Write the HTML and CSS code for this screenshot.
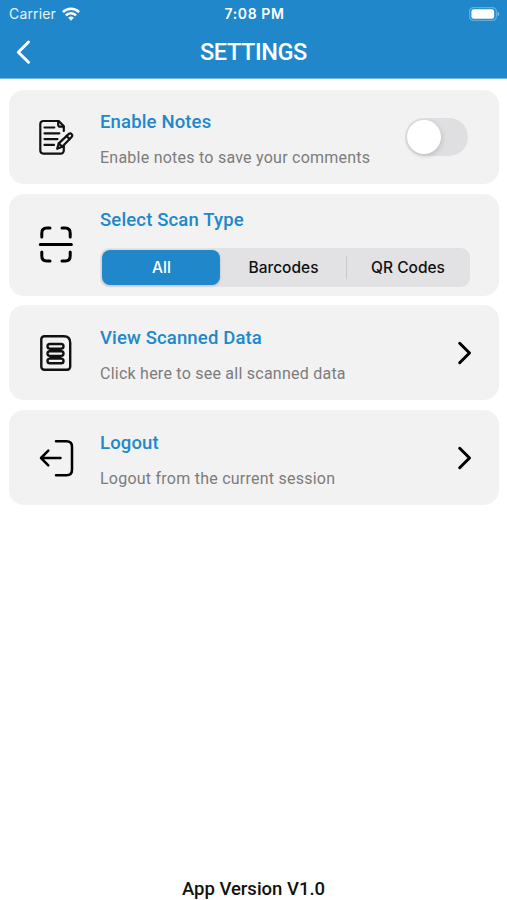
FILE: index.html
```html
<!DOCTYPE html>
<html lang="en">
<head>
<meta charset="utf-8">
<title>Settings</title>
<link rel="stylesheet" href="styles.css">
</head>
<body>
<div class="app">
  <header class="header">
    <div class="status">
      <div class="carrier"><span class="carrier-name">Carrier</span>
        <svg class="wifi" width="18" height="14" viewBox="0 0 18 14" fill="none" stroke="#fff" stroke-width="2.6"><path d="M.9 5.200a11.400 11.400 0 0 1 16.200 0"/><path d="M3.900 8.400a7.200 7.200 0 0 1 10.200 0"/><path d="M9 13.700 6.200 10.800a4 4 0 0 1 5.600 0z" fill="#fff" stroke="none"/></svg>
      </div>
      <span class="clock">7:08 PM</span>
      <svg class="battery" width="31" height="14" viewBox="0 0 31 14"><rect x=".6" y=".6" width="26.800" height="12.800" rx="4" fill="none" stroke="#64add9" stroke-width="1.200"/><rect x="2.400" y="2.200" width="22.800" height="9.600" rx="2.400" fill="#fff"/><path d="M28.500 4.800q1.800.7 1.800 2.200t-1.800 2.200z" fill="#7fbce3"/></svg>
    </div>
    <div class="nav">
      <svg class="back" width="16" height="26" viewBox="0 0 16 26" fill="none" stroke="#fff" stroke-width="3" stroke-linecap="round" stroke-linejoin="round"><path d="M13.500 3 3.300 13.200 13.500 23.200"/></svg>
      <h1 class="title">SETTINGS</h1>
    </div>
  </header>
  <main class="cards">
    <section class="card">
      <svg class="icon" width="36" height="38" viewBox="0 0 36 38" fill="none" stroke="#111" stroke-width="2.200" stroke-linecap="round" stroke-linejoin="round"><path d="M25.800 13V8.200L20.700 3H5.300a3 3 0 0 0-3 3v26.600a3 3 0 0 0 3 3h17.500a3 3 0 0 0 3-3V28"/><path d="M20.200 3v3.700a2 2 0 0 0 2 2h3.400"/><path d="M6.500 9.500h9.800M6.500 15.300h14.800M6.500 21.100h13M6.500 26.900h9.500"/><path d="m20.800 25.400 9.800-9.300q1.700-1.500 3 0t0 3L24.200 28.800l-5 2z"/><path d="m28.500 18 3.100 3.100M20.800 25.400l3.400 3.400"/></svg>
      <div class="body">
        <h2 class="name">Enable Notes</h2>
        <p class="desc">Enable notes to save your comments</p>
      </div>
      <div class="switch"><div class="knob"></div></div>
    </section>
    <section class="card card-scan">
      <svg class="icon" width="36" height="38" viewBox="0 0 36 38" fill="none" stroke="#000" stroke-width="3" stroke-linecap="round"><path d="M3.800 11V7q0-5 5-5H12M24 2h3.200q5 0 5 5v4M3.800 26v4q0 5 5 5H12M24 35h3.200q5 0 5-5v-4M2.200 18.400h31.200"/></svg>
      <div class="body">
        <h2 class="name">Select Scan Type</h2>
        <div class="segments">
          <div class="segment active">All</div>
          <div class="segment">Barcodes</div>
          <div class="divider"></div>
          <div class="segment">QR Codes</div>
        </div>
      </div>
    </section>
    <section class="card">
      <svg class="icon" width="36" height="38" viewBox="0 0 36 38" fill="none" stroke="#111" stroke-width="2.400" stroke-linejoin="round"><path d="M6.300 2.200h19.500q6.400 0 6.400 6.500v24a3 3 0 0 1-3 3H6.300a3 3 0 0 1-3-3V5.200a3 3 0 0 1 3-3z"/><rect x="9.500" y="10" width="16" height="4.600" rx="2.300"/><rect x="9.500" y="17.300" width="16" height="4.600" rx="2.300"/><rect x="9.500" y="24.600" width="16" height="4.600" rx="2.300"/><path d="M11.500 16h12M11.500 23.200h12" stroke-width="2"/></svg>
      <div class="body">
        <h2 class="name">View Scanned Data</h2>
        <p class="desc">Click here to see all scanned data</p>
      </div>
      <svg class="chevron" width="16" height="26" viewBox="0 0 16 26" fill="none" stroke="#000" stroke-width="3" stroke-linecap="round" stroke-linejoin="round"><path d="M3.700 3.300 13.500 13 3.700 22.700"/></svg>
    </section>
    <section class="card">
      <svg class="icon" width="36" height="38" viewBox="0 0 36 38" fill="none" stroke="#000" stroke-width="2.500" stroke-linecap="round" stroke-linejoin="round"><path d="M18 2.200h10.500q5.500 0 5.500 5.500v23q0 5.500-5.500 5.500H18"/><path d="M22.500 19H3M10.300 11.700 3 19l7.300 7.300"/></svg>
      <div class="body">
        <h2 class="name">Logout</h2>
        <p class="desc">Logout from the current session</p>
      </div>
      <svg class="chevron" width="16" height="26" viewBox="0 0 16 26" fill="none" stroke="#000" stroke-width="3" stroke-linecap="round" stroke-linejoin="round"><path d="M3.700 3.300 13.500 13 3.700 22.700"/></svg>
    </section>
  </main>
  <footer class="version">App Version V1.0</footer>
</div>
</body>
</html>
```
FILE: styles.css
```css
* { box-sizing: border-box; margin: 0; padding: 0; }
body { background: #fff; font-family: Roboto, "Liberation Sans", sans-serif; }
svg { display: block; flex: none; }
.app { width: 507px; height: 900px; display: flex; flex-direction: column; overflow: hidden; }
.header { height: 79px; background: #2088ca; color: #fff; border-bottom: 1px solid #70b6df; }
.status { height: 27px; padding: 0 7px 0 9px; display: grid; grid-template-columns: 1fr auto 1fr; align-items: center; font-family: Inter, sans-serif; font-size: 14px; white-space: nowrap; }
.carrier { display: flex; align-items: center; gap: 6px; }
.carrier-name { letter-spacing: .15px; opacity: .9; }
.clock { font-weight: 600; letter-spacing: .6px; }
.battery { justify-self: end; }
.nav { height: 50px; display: grid; grid-template-columns: 40px 1fr 40px; align-items: center; }
.back { margin-left: 15px; }
.title { text-align: center; font-size: 23.500px; font-weight: 500; line-height: 30px; letter-spacing: -.4px; }
.cards { padding: 10.500px 8px 0 8.500px; display: grid; grid-template-rows: 94.500px 102px 95px 95px; row-gap: 9.700px; }
.card { background: #f2f2f2; border-radius: 15px; display: flex; align-items: center; padding: 0 27px 0 29px; }
.body { flex: 1; align-self: flex-start; margin-left: 26.500px; padding-top: 20.500px; white-space: nowrap; }
.name { color: #2088ca; font-size: 18.500px; font-weight: 500; line-height: 24px; letter-spacing: .15px; }
.desc { margin-top: 12px; color: #7c7c7c; font-size: 16px; line-height: 24px; letter-spacing: .24px; }
.switch { width: 63px; height: 38px; margin-right: 4px; border-radius: 19px; background: #dfdfe1; padding: 2px; }
.knob { width: 34px; height: 34px; border-radius: 50%; background: #fff; box-shadow: 1px 2px 5px rgba(0, 0, 0, .15); }
.card-scan .icon { margin-top: 1px; }
.card-scan .body { padding-top: 14px; }
.segments { margin-top: 16px; width: 370px; height: 39px; padding: 2px; border-radius: 9px; background: #e2e2e4; display: grid; grid-template-columns: 118px 126px 1px 1fr; align-items: center; font-family: Inter, sans-serif; font-size: 15.500px; font-weight: 500; color: #111; }
.segment { height: 35px; padding: 1px 0 0 1px; display: flex; align-items: center; justify-content: center; border-radius: 8px; }
.active { background: #2088ca; color: #fff; box-shadow: 0 1px 3px rgba(0, 0, 0, .15); }
.divider { height: 23px; background: #cbcbce; }
.version { margin-top: auto; height: 23px; text-align: center; font-size: 18.500px; font-weight: 500; line-height: 24px; color: #111; }
```
